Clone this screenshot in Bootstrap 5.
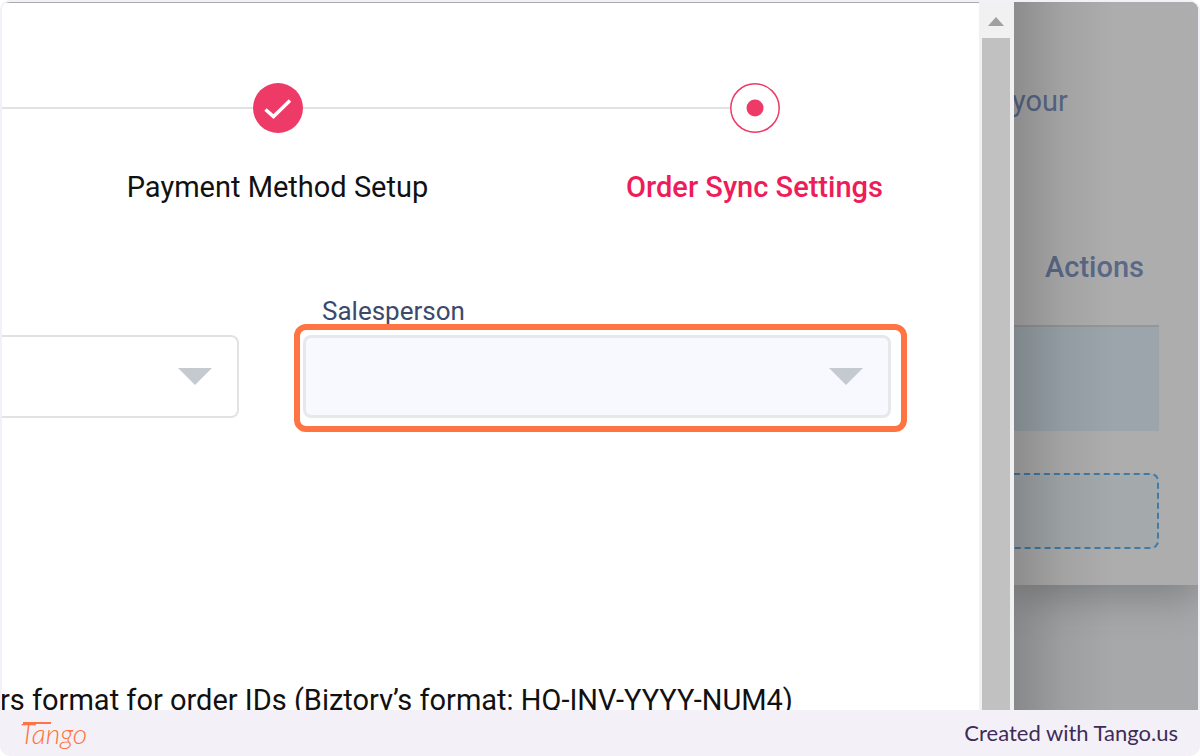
<!DOCTYPE html>
<html lang="en">
<head>
<meta charset="utf-8">
<meta name="viewport" content="width=device-width, initial-scale=1">
<title>Order Sync Settings</title>
<link href="https://cdn.jsdelivr.net/npm/bootstrap@5.3.0/dist/css/bootstrap.min.css" rel="stylesheet">
<style>
  :root { --pink: #ee3a67; --orange: #ff7442; --frame: #f3f1f7; }
  body { font-family: Roboto, "Liberation Sans", sans-serif; font-size: 29px; line-height: 36px; color: #111; }
  .frame { background: var(--frame); border-radius: 10px; padding: 2px 2px 0; }
  .stage { min-height: 0; border-radius: 8px 8px 0 0; background: #fff; }
  .dialog-body { min-width: 0; border-top: 1px solid #aaa; padding-top: 80px; }

  /* stepper */
  .stepper { margin-right: -14px; }
  .rail { height: 2px; background: #e2e2e2; }
  .stub { width: 37px; height: 2px; margin-top: 24px; }
  .dot { width: 50px; height: 50px; }
  .step-label { margin-top: 36px; }
  .step.active .step-label { color: #ee1c58; font-weight: 500; }

  /* fields */
  .fields { gap: 64px; margin-top: 90px; padding-right: 88px; }
  .field-cut { width: 237px; }
  .fields label { font-size: 26px; line-height: 32px; color: #3b4a6b; margin: 0 0 8px 19px; }
  .picker { height: 83px; border: 2px solid #e2e2e2; border-radius: 8px; background-color: #fff;
    background-image: url("data:image/svg+xml,%3Csvg xmlns='http://www.w3.org/2000/svg' viewBox='0 0 34 17'%3E%3Cpath fill='%23c5cad0' d='M0 0h34L17 17z'/%3E%3C/svg%3E");
    background-size: 34px 17px; background-position: right 25px center; }
  .field-cut .picker { border-left: 0; border-radius: 0 8px 8px 0; }
  .picker.filled { background-color: #f7f9fe; border: 3px solid #e6e8ec; }
  .highlight { inset: -11px -16px -14px -9px; border: 6px solid var(--orange); border-radius: 12px; pointer-events: none; }
  .format-note { margin-top: 264px; margin-left: -2px; }

  /* scrollbar */
  .scroll { width: 35px; background: #f1f1f1; padding: 0 4px 0 3px; }
  .scroll button { height: 36px; padding: 2px 0 0; }
  .thumb { background: #c1c1c1; }

  /* dimmed page behind the dialog */
  .behind { width: 184px; background: #a7a8aa; color: #5a6988; }
  .behind::after { content: ""; position: absolute; inset: 0 auto 0 0; width: 100px; background: linear-gradient(90deg, rgba(0,0,0,.19), rgba(0,0,0,.06) 50%, transparent); }
  .sheet { background: #adadad; height: 583px; padding-top: 81px; box-shadow: 0 8px 40px 2px rgba(0,0,0,.26); }
  .sheet-text { margin-left: -2px; }
  .grid-table { width: 145px; margin-top: 112px; }
  .grid-table th { font-weight: 500; line-height: 36px; padding: 18px 15px 40px 0; text-align: right; }
  .grid-table td { height: 105px; padding: 0; background: #9ba5ab; border-top: 2px solid #949698; }
  .drop { width: 145px; height: 76px; margin-top: 42px; background: #a4a9ac; border: 2px dashed #417aa5; border-left: 0; border-radius: 0 8px 8px 0; }

  /* footer */
  .credit { height: 46px; padding: 0 20px 0 18px; font-family: Lato, sans-serif; font-size: 22px; line-height: 28px; color: #3f2b58; }
  .logo { color: var(--orange); font-size: 28px; font-style: italic; font-weight: 300; }
  .logo::before { content: ""; position: absolute; top: 3px; left: 3px; width: 28px; height: 2px; background: var(--orange); }
</style>
</head>
<body>
<div class="frame vh-100 d-flex flex-column">
  <div class="stage flex-grow-1 d-flex overflow-hidden">
    <main class="dialog-body flex-grow-1 overflow-hidden">
      <div class="stepper d-flex">
        <div class="rail stub flex-shrink-0"></div>
        <div class="step flex-fill w-100">
          <div class="d-flex align-items-center">
            <div class="rail flex-fill"></div>
            <svg class="dot" viewBox="0 0 50 50" aria-hidden="true"><circle cx="25" cy="25" r="25" fill="#ee3a67"/><path d="M12.500 26.500l8 7L37 17.500" fill="none" stroke="#fff" stroke-width="3.500"/></svg>
            <div class="rail flex-fill"></div>
          </div>
          <div class="step-label text-center">Payment Method Setup</div>
        </div>
        <div class="step active flex-fill w-100">
          <div class="d-flex align-items-center">
            <div class="rail flex-fill"></div>
            <svg class="dot" viewBox="0 0 50 50" aria-hidden="true"><circle cx="25" cy="25" r="24.200" fill="#fff" stroke="#ee3a67" stroke-width="1.500"/><circle cx="25" cy="25" r="8.500" fill="#ee3a67"/></svg>
            <div class="rail flex-fill invisible"></div>
          </div>
          <div class="step-label text-center">Order Sync Settings</div>
        </div>
      </div>

      <form class="fields d-flex align-items-end">
        <div class="field-cut flex-shrink-0">
          <select class="form-select picker" aria-label="Order setting"><option></option></select>
        </div>
        <div class="flex-fill">
          <label class="d-block" for="salesperson">Salesperson</label>
          <div class="position-relative">
            <select class="form-select picker filled" id="salesperson"><option></option></select>
            <div class="highlight position-absolute"></div>
          </div>
        </div>
      </form>

      <p class="format-note text-nowrap mb-0">rs format for order IDs (Biztory’s format: HQ-INV-YYYY-NUM4)</p>
    </main>

    <div class="scroll flex-shrink-0 d-flex flex-column">
      <button type="button" class="btn border-0 rounded-0 d-flex align-items-center justify-content-center" aria-label="Scroll up">
        <svg width="16" height="9" viewBox="0 0 16 9"><path d="M0 9L8 0l8 9z" fill="#a0a0a0"/></svg>
      </button>
      <div class="thumb flex-fill"></div>
    </div>

    <aside class="behind flex-shrink-0 position-relative overflow-hidden">
      <div class="sheet">
        <div class="sheet-text">your</div>
        <table class="grid-table">
          <thead><tr><th scope="col">Actions</th></tr></thead>
          <tbody><tr><td></td></tr></tbody>
        </table>
        <div class="drop"></div>
      </div>
    </aside>
  </div>

  <footer class="credit flex-shrink-0 d-flex justify-content-between align-items-center">
    <a class="logo position-relative text-decoration-none" href="#">Tango</a>
    <span>Created with Tango.us</span>
  </footer>
</div>
<script src="https://cdn.jsdelivr.net/npm/bootstrap@5.3.0/dist/js/bootstrap.bundle.min.js"></script>
</body>
</html>
